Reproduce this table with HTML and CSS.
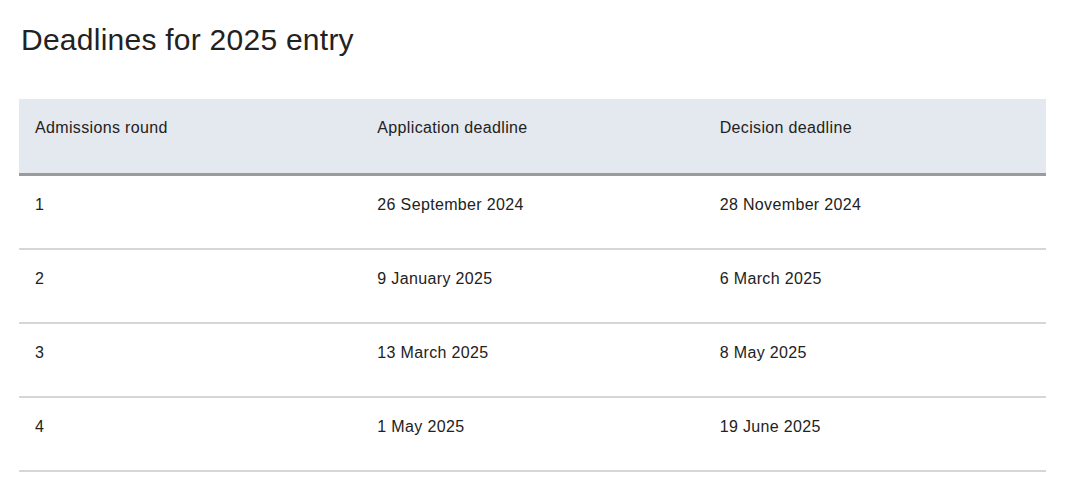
FILE: index.html
```html
<!DOCTYPE html>
<html lang="en">
<head>
<meta charset="utf-8">
<title>Deadlines for 2025 entry</title>
<link rel="stylesheet" href="styles.css">
</head>
<body>
<main class="page">
  <h1 class="title">Deadlines for 2025 entry</h1>
  <table class="deadlines">
    <thead>
      <tr>
        <th>Admissions round</th>
        <th>Application deadline</th>
        <th>Decision deadline</th>
      </tr>
    </thead>
    <tbody>
      <tr><td>1</td><td>26 September 2024</td><td>28 November 2024</td></tr>
      <tr><td>2</td><td>9 January 2025</td><td>6 March 2025</td></tr>
      <tr><td>3</td><td>13 March 2025</td><td>8 May 2025</td></tr>
      <tr><td>4</td><td>1 May 2025</td><td>19 June 2025</td></tr>
    </tbody>
  </table>
</main>
</body>
</html>
```

FILE: styles.css
```css
html, body {
  margin: 0;
  padding: 0;
  background: #ffffff;
}

body {
  font-family: "Liberation Sans", Arial, Helvetica, sans-serif;
  color: #222222;
}

.page {
  padding: 22px 34px 0 19px;
}

.title {
  margin: 0 0 41px 2px;
  font-size: 30px;
  line-height: 36px;
  letter-spacing: 0.25px;
  font-weight: 400;
  color: #222222;
}

.deadlines {
  width: 1027px;
  border-collapse: collapse;
  table-layout: fixed;
  font-size: 16px;
  line-height: 22px;
  letter-spacing: 0.35px;
}

.deadlines th {
  background: #e4e8ef;
  font-weight: 400;
  text-align: left;
  vertical-align: top;
  padding: 18px 16px 34px 16px;
  border-bottom: 3px solid #9b9b9b;
}

.deadlines td {
  text-align: left;
  vertical-align: top;
  padding: 18px 16px 32px 16px;
  border-bottom: 2px solid #d6d6d6;
}
```
